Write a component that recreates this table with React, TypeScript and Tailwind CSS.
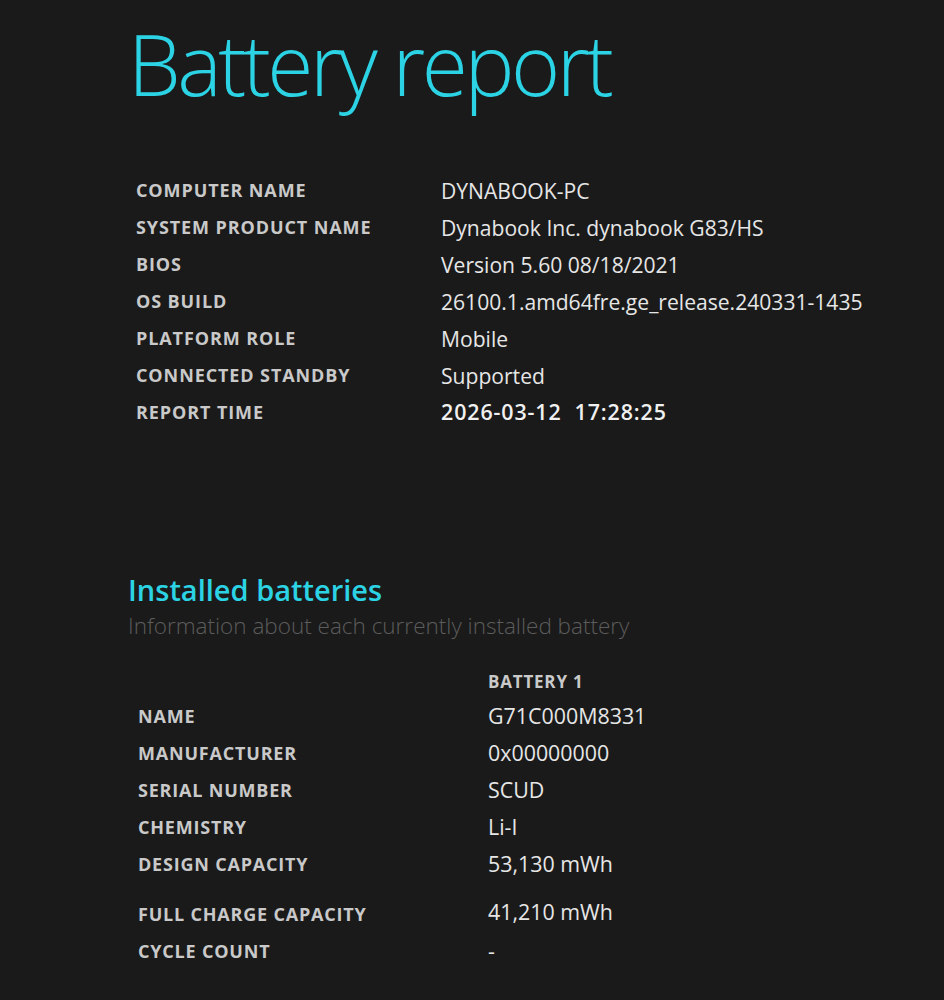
export default function App() {
  const system = [
    ["COMPUTER NAME", "DYNABOOK-PC"],
    ["SYSTEM PRODUCT NAME", "Dynabook Inc. dynabook G83/HS"],
    ["BIOS", "Version 5.60 08/18/2021"],
    ["OS BUILD", "26100.1.amd64fre.ge_release.240331-1435"],
    ["PLATFORM ROLE", "Mobile"],
    ["CONNECTED STANDBY", "Supported"],
  ];

  const battery = [
    ["NAME", "G71C000M8331"],
    ["MANUFACTURER", "0x00000000"],
    ["SERIAL NUMBER", "SCUD"],
    ["CHEMISTRY", "Li-I"],
    ["DESIGN CAPACITY", "53,130 mWh"],
  ];

  return (
    <div className="min-h-screen bg-[#1a1a1a] font-['Open_Sans',sans-serif] text-[#e6e6e6]">
      <div className="pl-[128px] pt-[14px]">
        <h1 className="text-[84px] font-[350] leading-[100px] text-[#2bd3e4] tracking-[-3.5px]">Battery report</h1>

        <table className="mt-[58px] ml-[8px] border-collapse">
          <tbody>
            {system.map(([k, v]) => (
              <tr key={k} className="h-[37px]">
                <td className="w-[305px] text-[18px] font-bold tracking-[0.9px] text-[#c9c9c9]">{k}</td>
                <td className="text-[21.1px] font-normal">{v}</td>
              </tr>
            ))}
            <tr className="h-[37px]">
              <td className="w-[305px] text-[18px] font-bold tracking-[0.9px] text-[#c9c9c9]">REPORT TIME</td>
              <td className="text-[21.4px] font-semibold tracking-[0.9px] whitespace-pre text-[#f0f0f0]">2026-03-12  17:28:25</td>
            </tr>
          </tbody>
        </table>

        <h2 className="mt-[141px] text-[29px] font-semibold leading-[36px] text-[#2bd3e4]">Installed batteries</h2>
        <p className="mt-[3px] text-[22.5px] font-light leading-[30px] text-[#5c5c5c]">Information about each currently installed battery</p>

        <table className="mt-[25px] ml-[10px] border-collapse">
          <thead>
            <tr className="h-[32px]">
              <td className="w-[350px]"></td>
              <td className="text-[17px] font-bold tracking-[0.8px] text-[#c9c9c9]">BATTERY 1</td>
            </tr>
          </thead>
          <tbody>
            {battery.map(([k, v]) => (
              <tr key={k} className="h-[37px]">
                <td className="text-[18px] font-bold tracking-[0.8px] text-[#c9c9c9]">{k}</td>
                <td className="text-[21.4px] font-normal">{v}</td>
              </tr>
            ))}
            <tr className="h-[50px] align-bottom">
              <td className="pb-[5px] text-[18px] font-bold tracking-[0.8px] text-[#c9c9c9]">FULL CHARGE CAPACITY</td>
              <td className="pb-[5px] text-[21.4px] font-normal">41,210 mWh</td>
            </tr>
            <tr className="h-[37px]">
              <td className="text-[18px] font-bold tracking-[0.8px] text-[#c9c9c9]">CYCLE COUNT</td>
              <td className="text-[21.4px] font-normal">-</td>
            </tr>
          </tbody>
        </table>
      </div>
    </div>
  );
}
